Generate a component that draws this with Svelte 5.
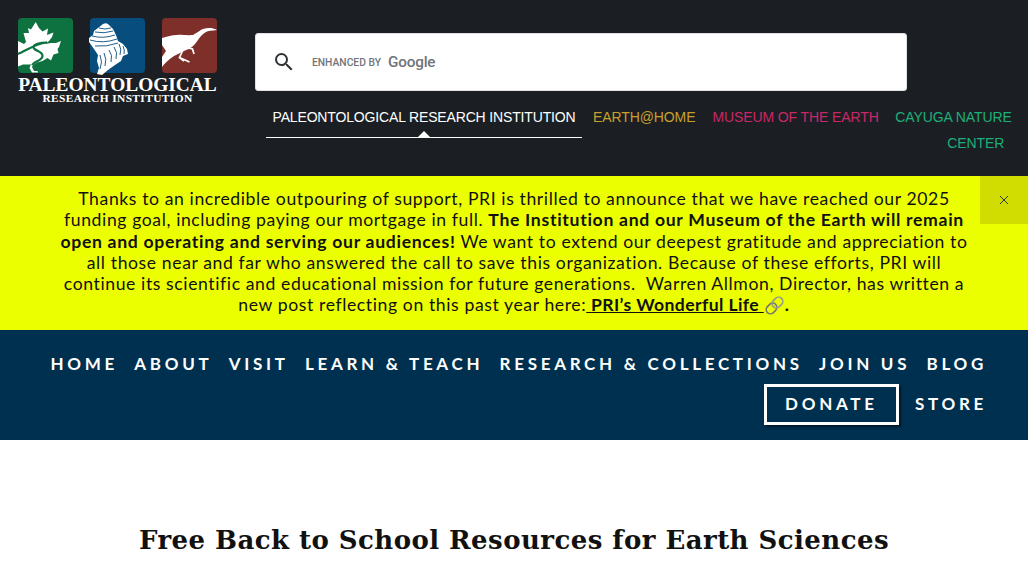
<script>
  const tabs = [
    { label: 'PALEONTOLOGICAL RESEARCH INSTITUTION', cls: 'active' },
    { label: 'EARTH@HOME', cls: 'gold' },
    { label: 'MUSEUM OF THE EARTH', cls: 'pink' }
  ];
  const links = ['HOME', 'ABOUT', 'VISIT', 'LEARN & TEACH', 'RESEARCH & COLLECTIONS', 'JOIN US', 'BLOG'];
</script>

<header class="top">
  <a class="logo" href="#top">
    <div class="tiles">
      <svg viewBox="0 0 55 55" class="tile"><rect width="55" height="55" rx="4" fill="#0d7240"/>
        <path d="M17.700 4L21 10l3.500 3.500 5.500-3-1 6.500 6.500-2.500-1.500 4.500-3 4-4 3 6 -1 5 0 5-2-2 6-1.500 2 1 4-5 1.500-2.500 6-3.500-2.500-5 3-5.500 1.500-4 2.500-1 2 2 4h3.500l.5 1.500H14l-2.500-4.500 1.500-3.500-8 0-5 2V23l6 3 2-2-2.500-9H11l-1-5 3 1.500z" fill="#fff"/>
        <path d="M0 36C8 33 16 26 29 24.500C22 24.500 15 26 15.500 29.500C16 33 24.500 33 24.500 38C24.500 43 16 43 14 47" fill="none" stroke="#0d7240" stroke-width="2.200"/>
      </svg>
      <svg viewBox="0 0 55 55" class="tile"><rect width="55" height="55" rx="4" fill="#074d7e"/>
        <path d="M13 6Q17 4 19 7L23 11 26 17 28 23 33 26 37 31 38 36 33 38 31 43 25 47 18 52 12 57 7 56 9 50 7 43 8 37 4 31-1 24-1 20 3 17 4 13 8 10z" fill="#fff"/>
        <path d="M9 10q6 2 12 0M5 14q9 2 18-1M2 18q11 3 23-1M0 22q13 4 27-1M5 28q12 1 23-3M29 26q3 5 1 11M33 28q2 4 1 8M24 29q4 5 2 12M19 32q4 5 2 12M14 35q3 6 1 13M10 37q3 7 0 14" stroke="#074d7e" stroke-width="0.900" fill="none"/>
      </svg>
      <svg viewBox="0 0 55 55" class="tile"><rect width="55" height="55" rx="4" fill="#7e2f2a"/>
        <path d="M0 20C5 18.500 10 17 15 17C20 16.500 26 17.500 31 17C35 15 38 12 41 11C45 9.500 50 9.500 53 11L55 12C50 12.500 46 13 44 14C40 16 38 19 36 22C34 25 32 27 30 29C27 31 24 32 22 33L12 38C7 41 3 45 0 49V39L4 33L0 27z" fill="#fff"/>
        <path d="M21 32L17.500 39.500L27.500 44M26 30L30.500 31L32 36M17.500 39.500L22 43" fill="none" stroke="#fff" stroke-width="1.700"/>
      </svg>
    </div>
    <div class="org">PALEONTOLOGICAL</div>
    <div class="sub">RESEARCH INSTITUTION</div>
  </a>
  <div class="right">
    <div class="search">
      <svg class="mag" viewBox="0 0 24 24"><path d="M15.500 14h-.79l-.28-.27A6.470 6.470 0 0 0 16 9.500 6.500 6.500 0 1 0 9.500 16c1.610 0 3.090-.59 4.230-1.570l.27.28v.79l5 4.990L20.490 19l-4.990-5zm-6 0C7.010 14 5 11.990 5 9.500S7.010 5 9.500 5 14 7.010 14 9.500 11.990 14 9.500 14z" fill="#303336"/></svg>
      <span class="enh">ENHANCED BY</span>
      <span class="goog">Google</span>
    </div>
    <nav class="tabs">
      {#each tabs as t}
        <a href="#top" class="tab {t.cls}">{t.label}</a>
      {/each}
      <a href="#top" class="tab green">CAYUGA NATURE<span class="second">CENTER</span></a>
    </nav>
  </div>
</header>

<section class="alert">
  <p>Thanks to an incredible outpouring of support, PRI is thrilled to announce that we have reached our 2025 funding goal, including paying our mortgage in full. <b>The Institution and our Museum of the Earth will remain open and operating and serving our audiences!</b> We want to extend our deepest gratitude and appreciation to all those near and far who answered the call to save this organization. Because of these efforts, PRI will continue its scientific and educational mission for future generations.&nbsp; Warren Allmon, Director, has written a new post reflecting on this past year here:<a href="#top"><b class="linked">&nbsp;PRI’s Wonderful Life <svg class="clip" viewBox="0 0 20 20"><g transform="rotate(-45 10 10)" fill="none" stroke-width="1.600"><rect x="0.500" y="6" width="11" height="8" rx="4" stroke="#77796a"/><rect x="8.500" y="6" width="11" height="8" rx="4" stroke="#9a9c8a"/></g></svg></b></a><b>.</b></p>
  <button class="close" aria-label="Close"><svg viewBox="0 0 10 10"><path d="M1 1l8 8M9 1l-8 8" stroke="#333" stroke-width="1" fill="none"/></svg></button>
</section>

<nav class="menu">
  {#each links as l}
    <a href="#top" class="item">{l}</a>
  {/each}
  <a href="#top" class="item donate">DONATE</a>
  <a href="#top" class="item">STORE</a>
</nav>

<main class="content">
  <h1>Free Back to School Resources for Earth Sciences</h1>
</main>

<style>
  :global(body) { margin: 0; background: #fff; overflow: hidden; }
  a { text-decoration: none; color: inherit; }
  .top { height: 176px; box-sizing: border-box; background: #1b1f24; display: flex; padding: 18px 0 0 18px; }
  .logo { width: 199px; flex: none; display: block; color: #fff; font-family: "Liberation Serif", serif; font-weight: 700; text-align: center; }
  .tiles { display: flex; justify-content: space-between; height: 54px; margin-bottom: 4px; }
  .tile { width: 55px; height: 55px; display: block; overflow: visible; }
  .org { font-size: 19.400px; line-height: 18px; white-space: nowrap; }
  .sub { font-size: 11.400px; line-height: 8px; letter-spacing: 0.4px; white-space: nowrap; }
  .right { margin-left: 38px; flex: 1; min-width: 0; }
  .search { margin-top: 15px; width: 652px; height: 58px; box-sizing: border-box; background: #fff; border: 1px solid #dfe1e5; border-radius: 3px; display: flex; align-items: center; padding-left: 16px; color: #70757a; font-family: Roboto, sans-serif; }
  .mag { width: 24px; height: 24px; flex: none; }
  .enh { font-size: 10.300px; margin-left: 16px; font-weight: 500; }
  .goog { font-size: 15.300px; margin-left: 7px; font-weight: 500; letter-spacing: -0.2px; }
  .tabs { display: flex; align-items: flex-start; margin: 10px 0 0 11px; font-family: "Liberation Sans", sans-serif; font-size: 14px; letter-spacing: -0.1px; line-height: 26px; }
  .tab { display: block; padding: 3px 6.500px 7px; flex: none; position: relative; white-space: nowrap; }
  .active { color: #fff; border-bottom: 1px solid #fff; margin-right: 4.500px; letter-spacing: -0.156px; }
  .active::after { content: ""; position: absolute; left: 50%; bottom: 0; margin-left: -6px; border: 6px solid transparent; border-top: 0; border-bottom-color: #fff; }
  .gold { color: #c7a02c; margin-right: 4px; }
  .pink { color: #c92866; margin-right: 4px; }
  .green { color: #1bb07a; padding: 3px 0 5px; margin-left: 6px; }
  .second { display: block; padding-left: 52px; }
  .alert { position: relative; height: 154px; box-sizing: border-box; background: #ecff00; color: #111; padding: 12px 60px 0; font-family: Lato, sans-serif; font-size: 17.600px; line-height: 21.300px; text-align: center; }
  .alert p { margin: 0; letter-spacing: 0.6px; }
  .alert b { letter-spacing: 0.7px; }
  .alert b.linked { letter-spacing: 0.4px; }
  .alert a { text-decoration: underline; }
  .clip { width: 21px; height: 21px; vertical-align: -5px; }
  .close { position: absolute; top: 0; right: 0; width: 48px; height: 48px; border: 0; padding: 0; background: #d1dd00; display: flex; align-items: center; justify-content: center; }
  .close svg { width: 10px; height: 10px; }
  .menu { height: 110px; box-sizing: border-box; background: #00304f; color: #fff; display: flex; flex-wrap: wrap; justify-content: flex-end; align-items: flex-start; align-content: flex-start; padding: 14px 41px 0 0; font-family: Lato, sans-serif; font-size: 17px; font-weight: 700; letter-spacing: 3.700px; }
  .item { margin-left: 16.300px; line-height: 40px; white-space: nowrap; }
  .donate { border: 3px solid #fff; line-height: 34px; padding: 0 18px 1px; box-shadow: 2px 2px 2px rgba(0,0,0,.5); }
  .content { padding-top: 82px; text-align: center; }
  h1 { margin: 0; font-family: "DejaVu Serif", serif; font-size: 26px; letter-spacing: 0.45px; line-height: 36px; font-weight: 700; color: #111; }
</style>
